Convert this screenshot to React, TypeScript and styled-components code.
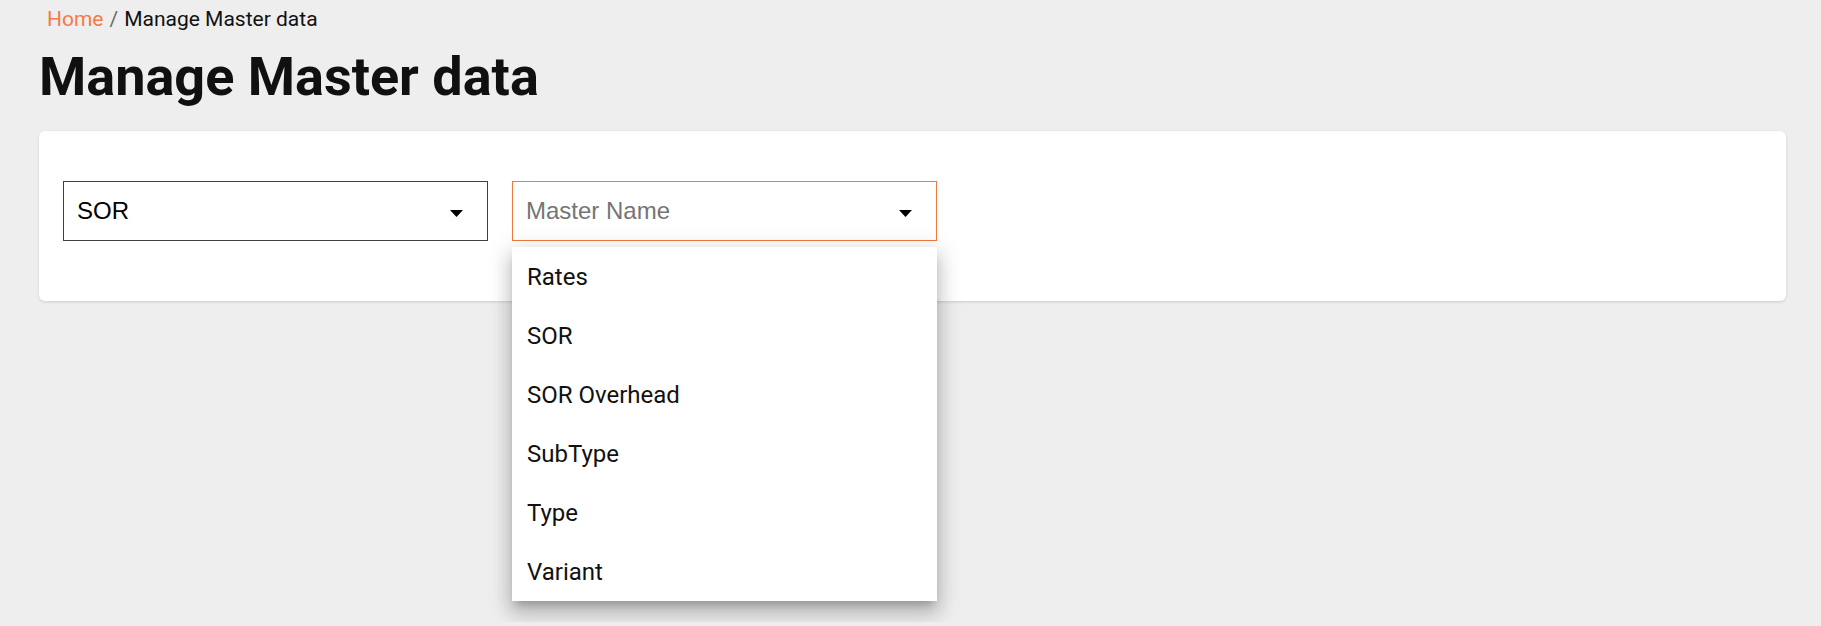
import React from "react";
import styled, { createGlobalStyle } from "styled-components";

const GlobalStyle = createGlobalStyle`
  html, body {
    margin: 0;
    padding: 0;
    background: #eeeeee;
  }
  body {
    font-family: Roboto, "Liberation Sans", Arial, sans-serif;
    color: #111111;
  }
`;

const Page = styled.div`
  padding: 4px 35px 0 39px;
  min-height: 622px;
  box-sizing: border-box;
`;

const Breadcrumb = styled.nav`
  display: flex;
  align-items: center;
  gap: 6px;
  padding-left: 8px;
  font-size: 21px;
  line-height: 31.5px;
`;

const Crumb = styled.span<{ $link?: boolean }>`
  color: ${(p) => (p.$link ? "#f47a4c" : "#111111")};
`;

const Sep = styled.span`
  color: #6b6b6b;
`;

const Title = styled.h1`
  margin: 9px 0 22px 0;
  font-size: 54px;
  line-height: 64.8px;
  font-weight: 700;
  color: #101010;
`;

const Card = styled.section`
  background: #ffffff;
  border-radius: 6px;
  box-shadow: 0 1px 3px rgba(0, 0, 0, 0.14);
  padding: 50px 24px 60px 24px;
  display: flex;
  gap: 24px;
`;

const SelectWrap = styled.div`
  position: relative;
  width: 425px;
`;

const SelectBox = styled.div<{ $active?: boolean }>`
  box-sizing: border-box;
  height: 60px;
  border: 1px solid ${(p) => (p.$active ? "#f27a3c" : "#404040")};
  background: #ffffff;
  display: flex;
  align-items: center;
  justify-content: space-between;
  padding: 0 24px 0 13px;
  font-family: "Liberation Sans", Arial, sans-serif;
  font-size: 24px;
`;

const Value = styled.span<{ $placeholder?: boolean }>`
  color: ${(p) => (p.$placeholder ? "#757575" : "#000000")};
`;

const Arrow = styled.svg`
  width: 13px;
  height: 7px;
  margin-top: 4px;
  display: block;
`;

const Menu = styled.ul`
  position: absolute;
  top: 66px;
  left: 0;
  width: 425px;
  margin: 0;
  padding: 0;
  list-style: none;
  background: #ffffff;
  box-shadow: 0 7px 8px -4px rgba(0, 0, 0, 0.2), 0 12px 16px 2px rgba(0, 0, 0, 0.14),
    0 5px 22px 4px rgba(0, 0, 0, 0.12);
  z-index: 10;
`;

const MenuItem = styled.li`
  height: 59px;
  display: flex;
  align-items: center;
  padding-left: 15px;
  font-family: Roboto, sans-serif;
  font-size: 24px;
  color: #111111;
`;

const DropArrow = () => (
  <Arrow viewBox="0 0 13 7">
    <polygon points="0,0 13,0 6.5,7" fill="#000" />
  </Arrow>
);

const options = ["Rates", "SOR", "SOR Overhead", "SubType", "Type", "Variant"];

export default function App() {
  return (
    <>
      <GlobalStyle />
      <Page>
        <Breadcrumb>
          <Crumb $link>Home</Crumb>
          <Sep>/</Sep>
          <Crumb>Manage Master data</Crumb>
        </Breadcrumb>
        <Title>Manage Master data</Title>
        <Card>
          <SelectWrap>
            <SelectBox>
              <Value>SOR</Value>
              <DropArrow />
            </SelectBox>
          </SelectWrap>
          <SelectWrap>
            <SelectBox $active>
              <Value $placeholder>Master Name</Value>
              <DropArrow />
            </SelectBox>
            <Menu>
              {options.map((o) => (
                <MenuItem key={o}>{o}</MenuItem>
              ))}
            </Menu>
          </SelectWrap>
        </Card>
      </Page>
    </>
  );
}
